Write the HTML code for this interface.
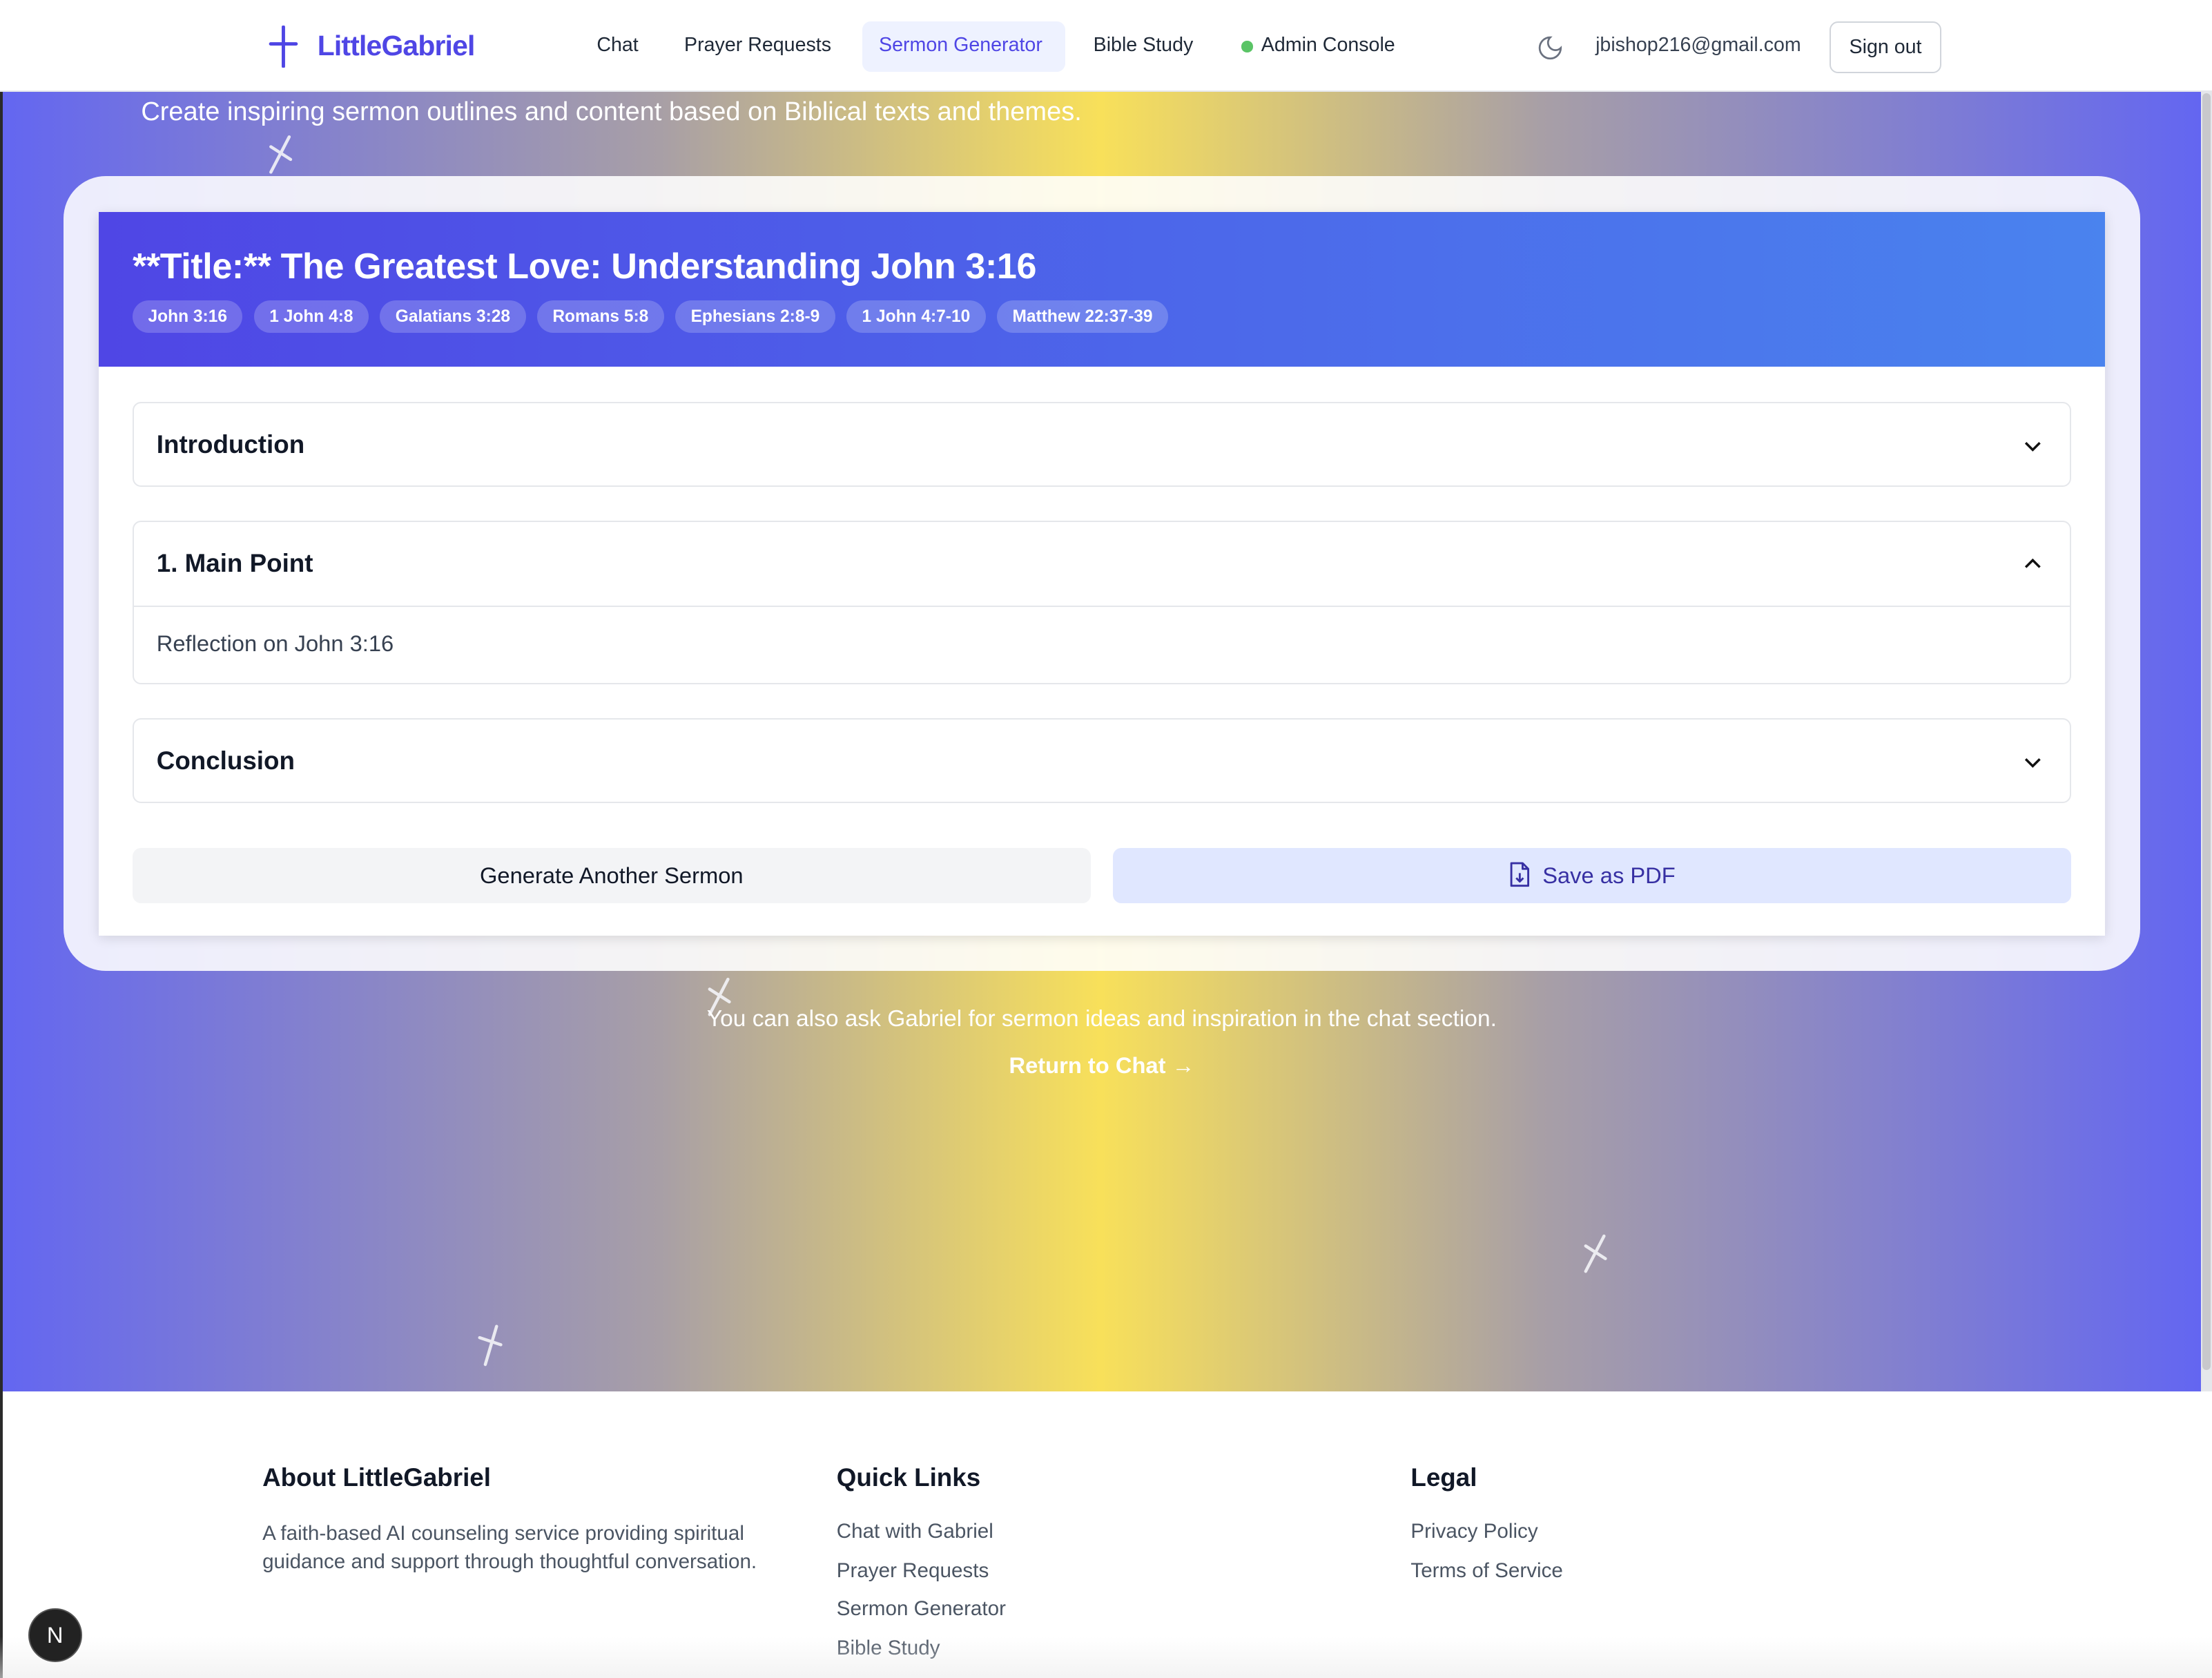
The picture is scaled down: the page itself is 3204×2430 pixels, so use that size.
<!DOCTYPE html>
<html><head><meta charset="utf-8">
<style>
*{box-sizing:border-box;margin:0;padding:0}
html,body{width:3204px;height:2430px;overflow:hidden;background:#fff}
#r{zoom:2.0434;width:1568px;height:1189px;position:relative;font-family:"Liberation Sans",sans-serif;overflow:hidden;background:#fff}
.abs{position:absolute}
.bg{left:0;top:65px;width:1560px;height:921px;background:linear-gradient(90deg,#6366f1 0%,#a89fa6 30%,#f8e05a 50%,#a89fa6 70%,#6366f1 100%)}
nav{left:0;top:0;width:1568px;height:65px;background:#fff;border-bottom:1px solid #e5e7eb}
.nl{font-size:14px;color:#1f2937;top:24px}
.card{left:45px;top:125px;width:1472px;height:563px;border-radius:30px;background:rgba(255,255,255,.88)}
.inner{left:70px;top:150px;width:1422px;height:513px;background:#fff;box-shadow:0 2px 8px rgba(0,0,0,.12)}
.hdr{left:70px;top:150px;width:1422px;height:110px;background:linear-gradient(90deg,#4f46e5,#4a83ee)}
.tag{display:inline-block;height:23px;line-height:23px;padding:0 11px;border-radius:12px;background:rgba(255,255,255,.2);color:#fff;font-size:12px;font-weight:bold;margin-right:8px}
.sec{left:94px;width:1374px;border:1px solid #e5e7eb;border-radius:6px;background:#fff}
.sec h3{font-size:18px;font-weight:bold;color:#111827;position:absolute;left:16px;top:19px}
.chev{position:absolute;right:18px;top:22px}
.btn{top:601px;height:39px;border-radius:6px;font-size:16px;text-align:center;line-height:39px}
.fh{font-size:18px;font-weight:bold;color:#111827;top:1037px}
.fl{font-size:14.5px;color:#4b5563}
</style></head><body><div id="r">
<div class="abs bg"></div>
<div class="abs" style="left:0;top:0;width:1568px;height:2px;background:#2a2a2a"></div>
<div class="abs" style="left:0;top:0;width:2px;height:1189px;background:#2a2a2a"></div>
<div class="abs" style="left:1560px;top:65px;width:8px;height:921px;background:#e5e7eb"></div>
<div class="abs" style="left:1561px;top:66px;width:6px;height:905px;background:#c8c8cc;border-radius:3px"></div>
<nav class="abs">
 <svg class="abs" style="left:190px;top:18px" width="22" height="30"><path d="M11 1V29M2 13H20" stroke="#4f46e5" stroke-width="2.4" stroke-linecap="round"/></svg>
 <div class="abs" style="left:225px;top:21px;font-size:20px;font-weight:bold;color:#4f46e5;letter-spacing:-.4px">LittleGabriel</div>
 <div class="abs nl" style="left:423px">Chat</div>
 <div class="abs nl" style="left:485px">Prayer Requests</div>
 <div class="abs" style="left:611px;top:15px;width:144px;height:36px;background:#eef2ff;border-radius:6px"></div>
 <div class="abs nl" style="left:623px;color:#4f46e5">Sermon Generator</div>
 <div class="abs nl" style="left:775px">Bible Study</div>
 <div class="abs" style="left:880px;top:29px;width:8px;height:8px;border-radius:50%;background:#5ac466"></div>
 <div class="abs nl" style="left:894px">Admin Console</div>
 <svg class="abs" style="left:1089px;top:24px" width="20" height="20" viewBox="0 0 24 24"><path d="M12 3a6 6 0 0 0 9 9 9 9 0 1 1-9-9z" fill="none" stroke="#6b7280" stroke-width="1.6"/></svg>
 <div class="abs nl" style="left:1131px;color:#374151">jbishop216@gmail.com</div>
 <div class="abs" style="left:1297px;top:15px;width:79px;height:37px;border:1px solid #d1d5db;border-radius:6px;font-size:14px;line-height:35px;text-align:center;color:#1f2937">Sign out</div>
</nav>
<div class="abs" style="left:100px;top:69px;font-size:18.6px;color:#fff">Create inspiring sermon outlines and content based on Biblical texts and themes.</div>
<svg class="abs" style="left:0;top:0" width="1568" height="1189">
 <g stroke="#f4f4f8" stroke-width="2.2" stroke-linecap="round" opacity=".9">
  <path d="M205 97L192 122M192 104L206 113"/>
  <path d="M516 694L503 719M503 701L517 710"/>
  <path d="M1137 876L1124 901M1124 883L1138 892"/>
  <path d="M352 940L344 967M340 948L355 953"/>
 </g>
</svg>
<div class="abs card"></div>
<div class="abs inner"></div>
<div class="abs hdr">
 <div class="abs" style="left:24px;top:24px;font-size:25.5px;font-weight:bold;color:#fff;letter-spacing:-.2px">**Title:** The Greatest Love: Understanding John 3:16</div>
 <div class="abs" style="left:24px;top:63px;white-space:nowrap"><span class="tag">John 3:16</span><span class="tag">1 John 4:8</span><span class="tag">Galatians 3:28</span><span class="tag">Romans 5:8</span><span class="tag">Ephesians 2:8-9</span><span class="tag">1 John 4:7-10</span><span class="tag">Matthew 22:37-39</span></div>
</div>
<div class="abs sec" style="top:285px;height:60px"><h3>Introduction</h3><svg class="chev" width="16" height="16" viewBox="0 0 16 16"><path d="M3 6l5 5 5-5" fill="none" stroke="#111" stroke-width="1.7"/></svg></div>
<div class="abs sec" style="top:369px;height:116px"><h3>1. Main Point</h3><svg class="chev" width="16" height="16" viewBox="0 0 16 16"><path d="M3 10l5-5 5 5" fill="none" stroke="#111" stroke-width="1.7"/></svg>
 <div class="abs" style="left:0;top:59px;width:1372px;border-top:1px solid #e5e7eb"></div>
 <div class="abs" style="left:16px;top:77px;font-size:16px;color:#374151">Reflection on John 3:16</div></div>
<div class="abs sec" style="top:509px;height:60px"><h3>Conclusion</h3><svg class="chev" width="16" height="16" viewBox="0 0 16 16"><path d="M3 6l5 5 5-5" fill="none" stroke="#111" stroke-width="1.7"/></svg></div>
<div class="abs btn" style="left:94px;width:679px;background:#f3f4f6;color:#111827">Generate Another Sermon</div>
<div class="abs btn" style="left:789px;width:679px;background:#e0e7ff;color:#3730a3">
 <svg style="vertical-align:-3px;margin-right:8px" width="16" height="18" viewBox="0 0 16 18"><path d="M2 1h8l4 4v12H2z M10 1v4h4 M8 8v6 M5.5 11.5L8 14l2.5-2.5" fill="none" stroke="#3730a3" stroke-width="1.4" stroke-linejoin="round"/></svg>Save as PDF</div>
<div class="abs" style="left:0;top:713px;width:1562px;text-align:center;font-size:16.4px;color:#fff">You can also ask Gabriel for sermon ideas and inspiration in the chat section.</div>
<div class="abs" style="left:0;top:746px;width:1562px;text-align:center;font-size:16px;font-weight:bold;color:#fff">Return to Chat →</div>
<div class="abs fh" style="left:186px">About LittleGabriel</div>
<div class="abs fl" style="left:186px;top:1077px;line-height:20px;width:380px">A faith-based AI counseling service providing spiritual guidance and support through thoughtful conversation.</div>
<div class="abs fh" style="left:593px">Quick Links</div>
<div class="abs fl" style="left:593px;top:1077px">Chat with Gabriel</div>
<div class="abs fl" style="left:593px;top:1105px">Prayer Requests</div>
<div class="abs fl" style="left:593px;top:1132px">Sermon Generator</div>
<div class="abs fl" style="left:593px;top:1160px">Bible Study</div>
<div class="abs fh" style="left:1000px">Legal</div>
<div class="abs fl" style="left:1000px;top:1077px">Privacy Policy</div>
<div class="abs fl" style="left:1000px;top:1105px">Terms of Service</div>
<div class="abs" style="left:0;top:1160px;width:1568px;height:29px;background:linear-gradient(180deg,rgba(240,240,240,0),rgba(236,236,236,.6))"></div>
<div class="abs" style="left:20px;top:1140px;width:38px;height:38px;border-radius:50%;background:#222;border:1px solid #555;color:#fff;font-size:16px;text-align:center;line-height:36px">N</div>
</div></body></html>
